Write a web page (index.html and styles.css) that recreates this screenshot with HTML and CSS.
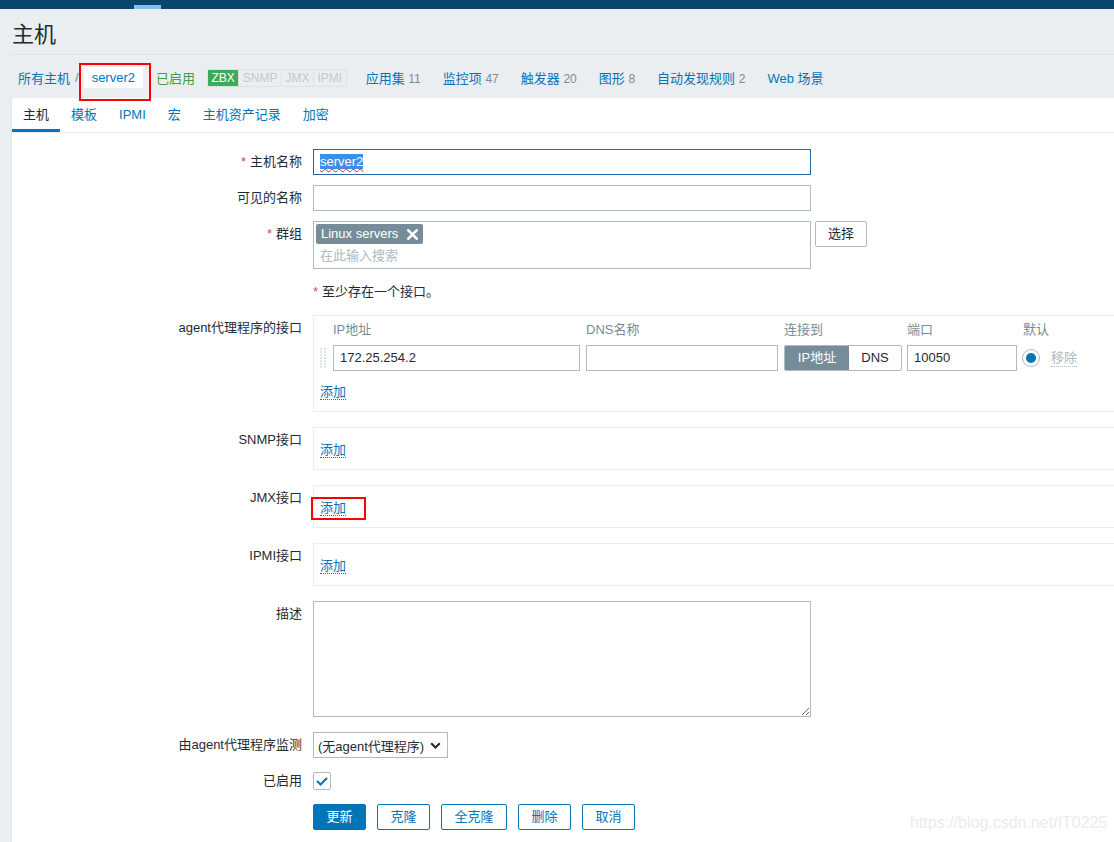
FILE: index.html
```html
<!DOCTYPE html>
<html lang="zh">
<head>
<meta charset="utf-8">
<title>主机</title>
<link rel="stylesheet" href="styles.css">
</head>
<body>
<div class="topbar"><span class="topbar-mark"></span></div>
<header class="page-header"><h1 class="title">主机</h1></header>
<nav class="host-nav">
  <a class="nav-link">所有主机</a>
  <span class="crumb-sep">/</span>
  <span class="crumb-current">server2</span>
  <span class="status-on">已启用</span>
  <span class="avail"><span class="av av-on">ZBX</span><span class="av">SNMP</span><span class="av">JMX</span><span class="av">IPMI</span></span>
  <a class="nav-link nav-first">应用集 <span class="count">11</span></a>
  <a class="nav-link nav-item">监控项 <span class="count">47</span></a>
  <a class="nav-link nav-item">触发器 <span class="count">20</span></a>
  <a class="nav-link nav-item">图形 <span class="count">8</span></a>
  <a class="nav-link nav-item">自动发现规则 <span class="count">2</span></a>
  <a class="nav-link nav-item">Web 场景</a>
</nav>
<main class="panel">
  <div class="tabs">
    <span class="tab tab-active">主机</span>
    <a class="tab">模板</a>
    <a class="tab">IPMI</a>
    <a class="tab">宏</a>
    <a class="tab">主机资产记录</a>
    <a class="tab">加密</a>
  </div>
  <div class="form">
    <div class="row">
      <div class="label"><span class="req">*</span>主机名称</div>
      <div class="field"><div class="input input-wide input-focus"><span class="sel">server2</span></div></div>
    </div>
    <div class="row">
      <div class="label">可见的名称</div>
      <div class="field"><div class="input input-wide"></div></div>
    </div>
    <div class="row">
      <div class="label"><span class="req">*</span>群组</div>
      <div class="field field-gap">
        <div class="multiselect">
          <span class="chip">Linux servers<svg class="chip-x" width="11" height="11" viewBox="0 0 11 11"><path d="M1.3 1.3 L9.7 9.7 M9.7 1.3 L1.3 9.7" stroke="#fff" stroke-width="2.6" stroke-linecap="round"/></svg></span>
          <div class="ms-placeholder">在此输入搜索</div>
        </div>
        <button class="btn-plain" type="button">选择</button>
      </div>
    </div>
    <div class="row">
      <div class="label"></div>
      <div class="field field-text"><span class="req">*</span>至少存在一个接口。</div>
    </div>
    <div class="row row-wide-gap">
      <div class="label">agent代理程序的接口</div>
      <div class="field">
        <div class="iface">
          <div class="iface-head">
            <span class="c-handle"></span>
            <span class="c-ip">IP地址</span>
            <span class="c-dns">DNS名称</span>
            <span class="c-conn">连接到</span>
            <span class="c-port">端口</span>
            <span class="c-def">默认</span>
          </div>
          <div class="iface-row">
            <span class="c-handle"><svg width="7" height="20" viewBox="0 0 7 20"><g fill="#dfe3e6"><rect x="0" y="0" width="2" height="2"/><rect x="4" y="0" width="2" height="2"/><rect x="0" y="3" width="2" height="2"/><rect x="4" y="3" width="2" height="2"/><rect x="0" y="6" width="2" height="2"/><rect x="4" y="6" width="2" height="2"/><rect x="0" y="9" width="2" height="2"/><rect x="4" y="9" width="2" height="2"/><rect x="0" y="12" width="2" height="2"/><rect x="4" y="12" width="2" height="2"/><rect x="0" y="15" width="2" height="2"/><rect x="4" y="15" width="2" height="2"/><rect x="0" y="18" width="2" height="2"/><rect x="4" y="18" width="2" height="2"/></g></svg></span>
            <div class="input c-ip">172.25.254.2</div>
            <div class="input c-dns"></div>
            <div class="toggle c-conn"><span class="tg tg-on">IP地址</span><span class="tg tg-off">DNS</span></div>
            <div class="input c-port">10050</div>
            <span class="radio"><span class="radio-dot"></span></span>
            <span class="remove">移除</span>
          </div>
          <div class="iface-add"><a class="add-link">添加</a></div>
        </div>
      </div>
    </div>
    <div class="row row-wide-gap">
      <div class="label">SNMP接口</div>
      <div class="field"><div class="iface iface-empty"><div class="iface-add-only"><a class="add-link">添加</a></div></div></div>
    </div>
    <div class="row row-wide-gap">
      <div class="label">JMX接口</div>
      <div class="field"><div class="iface iface-empty"><div class="iface-add-only"><a class="add-link">添加</a></div></div></div>
    </div>
    <div class="row row-wide-gap">
      <div class="label">IPMI接口</div>
      <div class="field"><div class="iface iface-empty"><div class="iface-add-only"><a class="add-link">添加</a></div></div></div>
    </div>
    <div class="row row-wide-gap">
      <div class="label">描述</div>
      <div class="field"><textarea class="textarea"></textarea></div>
    </div>
    <div class="row">
      <div class="label">由agent代理程序监测</div>
      <div class="field"><div class="select"><span>(无agent代理程序)</span><svg width="11" height="7" viewBox="0 0 11 7"><path d="M1.2 1.2 L5.5 5.5 L9.8 1.2" fill="none" stroke="#1f2c33" stroke-width="2"/></svg></div></div>
    </div>
    <div class="row">
      <div class="label">已启用</div>
      <div class="field field-center"><span class="checkbox"><svg width="12" height="9" viewBox="0 0 12 9"><path d="M1 4 L4.6 7.5 L11 1" fill="none" stroke="#0275b8" stroke-width="2"/></svg></span></div>
    </div>
    <div class="row">
      <div class="label"></div>
      <div class="field buttons">
        <button class="btn btn-primary" type="button">更新</button>
        <button class="btn" type="button">克隆</button>
        <button class="btn" type="button">全克隆</button>
        <button class="btn" type="button">删除</button>
        <button class="btn" type="button">取消</button>
      </div>
    </div>
  </div>
</main>
<div class="mark mark-1"></div>
<div class="mark mark-2"></div>
<div class="watermark">https://blog.csdn.net/IT0225</div>
</body>
</html>
```
FILE: styles.css
```css
* { box-sizing: border-box; }
html, body { margin: 0; padding: 0; overflow: hidden; }
body {
  width: 1114px;
  height: 842px;
  position: relative;
  background: #ebeef0;
  font-family: "Liberation Sans", "Noto Sans CJK SC", Arial, sans-serif;
  font-size: 13px;
  color: #1f2c33;
}
a { color: #0275b8; text-decoration: none; }

.topbar {
  height: 9px;
  background: #0a466a;
  padding: 5px 0 0 134px;
}
.topbar-mark { display: block; width: 27px; height: 4px; background: #7fc1ee; }

.page-header {
  height: 46px;
  margin-left: 11px;
  padding: 7px 0 0 1px;
  border-bottom: 1px solid #dde2e5;
}
.title {
  margin: 0;
  font-size: 22px;
  font-weight: normal;
  line-height: 38px;
  color: #1f2c33;
}

.host-nav {
  display: flex;
  align-items: center;
  height: 43px;
  padding: 2px 0 0 18px;
  white-space: nowrap;
}
.crumb-sep { color: #768d99; margin: 0 4px 0 5px; }
.crumb-current {
  height: 23px;
  line-height: 21px;
  padding: 0 8px;
  background: #fff;
  border: 1px solid #eef1f3;
  color: #0275b8;
}
.status-on { color: #429e47; margin-left: 12px; }
.avail {
  display: flex;
  margin-left: 12px;
  border: 1px solid #dde2e5;
  border-radius: 2px;
  height: 18px;
  overflow: hidden;
}
.av {
  font-size: 12px;
  line-height: 16px;
  padding: 0 3.5px;
  color: #c2cacf;
  border-left: 1px solid #dde2e5;
}
.av:first-child { border-left: 0; }
.av-on { background: #3daa5c; color: #fff; }
.nav-first { margin-left: 19px; }
.nav-item { margin-left: 22px; }
.count { color: #768d99; font-size: 12px; }

.panel {
  margin-left: 11px;
  border-left: 1px solid #e2e6e8;
  background: #fff;
  height: 744px;
  overflow: hidden;
}
.tabs {
  display: flex;
  height: 35px;
  border-bottom: 1px solid #ebeef0;
}
.tab {
  padding: 0 11px;
  line-height: 34px;
  color: #0275b8;
}
.tab-active {
  color: #1f2c33;
  box-shadow: inset 0 -3px 0 #0275b8;
}

.form { padding-top: 16px; }
.row {
  display: grid;
  grid-template-columns: 290px 1fr;
  column-gap: 11px;
  margin-bottom: 10px;
}
.row-wide-gap { margin-bottom: 15px; }
.label {
  text-align: right;
  line-height: 25px;
  white-space: nowrap;
}
.req { color: #d64e4e; margin-right: 4px; }
.field { display: flex; align-items: flex-start; min-height: 26px; }
.field-gap { gap: 4px; }
.field-text { line-height: 26px; }
.field-center { align-items: center; }

.input {
  height: 26px;
  border: 1px solid #acbbc4;
  padding: 0 6px;
  line-height: 24px;
  background: #fff;
  white-space: nowrap;
  overflow: hidden;
}
.input-wide { width: 498px; }
.input-focus { border-color: #1f6aa5; }
.sel {
  background: #3d8ee6;
  color: #fff;
  text-decoration: underline wavy #e02020;
  text-decoration-thickness: 1px;
  text-underline-offset: 2px;
}

.multiselect {
  width: 498px;
  height: 48px;
  border: 1px solid #acbbc4;
  padding: 2px 0 0 2px;
}
.chip {
  display: inline-flex;
  align-items: center;
  height: 20px;
  padding: 0 5px 0 5px;
  background: #768d99;
  color: #fff;
  border-radius: 2px;
  line-height: 20px;
}
.chip-x { margin-left: 9px; }
.ms-placeholder {
  color: #acbbc4;
  line-height: 20px;
  padding-left: 4px;
  margin-top: 2px;
}
.btn-plain {
  height: 26px;
  padding: 0 12px;
  border: 1px solid #acbbc4;
  border-radius: 2px;
  background: #fff;
  font: inherit;
  color: #1f2c33;
  line-height: 24px;
}

.iface {
  width: 840px;
  border: 1px solid #ebeef0;
  padding: 3px 0 7px 6px;
}
.iface-empty { padding: 10px 0 7px 6px; }
.iface-head {
  display: flex;
  line-height: 22px;
  color: #768d99;
  margin-bottom: 4px;
  white-space: nowrap;
}
.iface-row { display: flex; align-items: center; height: 26px; }
.c-handle { width: 13px; flex: none; display: flex; align-items: center; }
.c-ip { width: 247px; margin-right: 6px; flex: none; }
.c-dns { width: 192px; margin-right: 6px; flex: none; }
.c-conn { width: 118px; margin-right: 5px; flex: none; }
.c-port { width: 110px; margin-right: 5px; flex: none; }
.c-def { padding-left: 1px; }
.toggle {
  display: flex;
  height: 26px;
  border: 1px solid #acbbc4;
  border-radius: 2px;
  overflow: hidden;
}
.tg { line-height: 24px; text-align: center; }
.tg-on { width: 64px; background: #768d99; color: #fff; }
.tg-off { flex: 1; color: #1f2c33; }
.radio {
  width: 18px;
  height: 18px;
  border: 1px solid #acbbc4;
  border-radius: 50%;
  display: flex;
  align-items: center;
  justify-content: center;
  flex: none;
}
.radio-dot { width: 10px; height: 10px; border-radius: 50%; background: #0275b8; }
.remove {
  margin-left: 11px;
  color: #acbbc4;
  border-bottom: 1px dotted #acbbc4;
  line-height: 17px;
}
.iface-add { margin-top: 9px; line-height: 24px; }
.iface-add-only { line-height: 24px; }
.add-link { border-bottom: 1px dotted #0275b8; }

.textarea {
  display: block;
  width: 498px;
  height: 116px;
  margin: 0;
  border: 1px solid #acbbc4;
  background: #fff;
  resize: both;
}
.select {
  display: flex;
  align-items: center;
  gap: 6px;
  height: 26px;
  padding: 0 6px 0 4px;
  border: 1px solid #acbbc4;
  background: #fff;
  white-space: nowrap;
}
.checkbox {
  width: 18px;
  height: 18px;
  border: 1px solid #acbbc4;
  border-radius: 2px;
  display: flex;
  align-items: center;
  justify-content: center;
}

.buttons { gap: 11px; }
.btn {
  height: 26px;
  padding: 0 12.5px;
  border: 1px solid #0275b8;
  border-radius: 2px;
  background: #fff;
  color: #0275b8;
  font: inherit;
  line-height: 24px;
}
.btn-primary { background: #0275b8; color: #fff; }

.mark { position: absolute; border: 2px solid #f00; }
.mark-1 { left: 79px; top: 63px; width: 72px; height: 38px; }
.mark-2 { left: 311px; top: 497px; width: 55px; height: 23px; }

.watermark {
  position: absolute;
  left: 910px;
  top: 814px;
  font-size: 16px;
  line-height: 18px;
  color: #ebebeb;
  white-space: nowrap;
}
```
